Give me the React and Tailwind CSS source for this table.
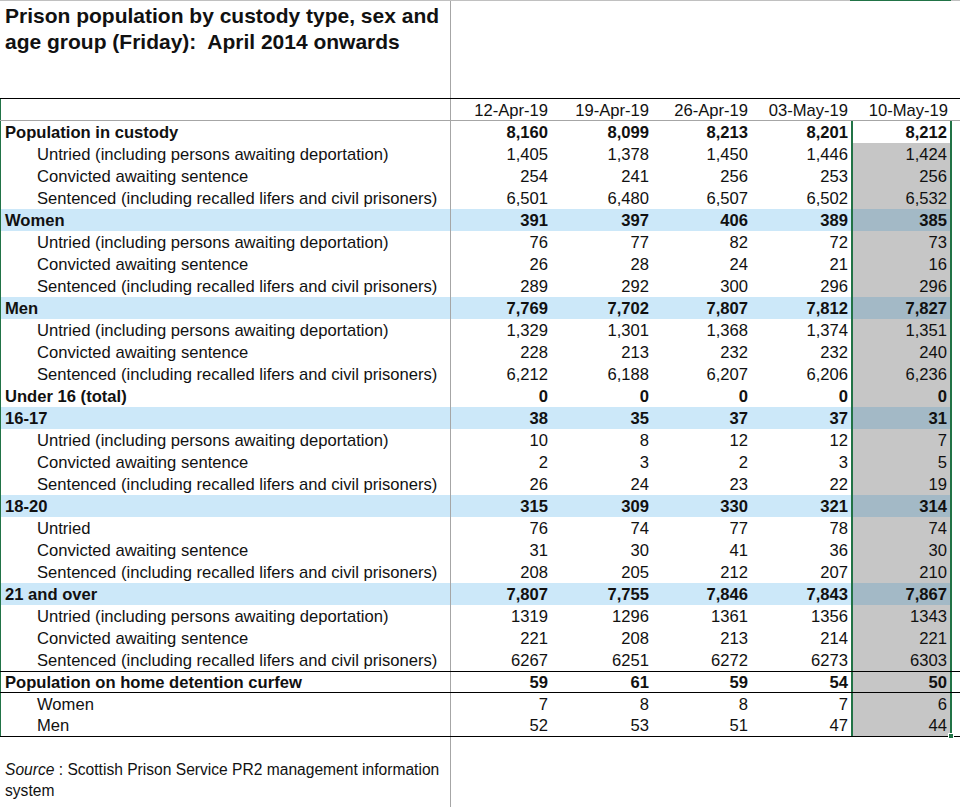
import React from 'react';

const dates = ['12-Apr-19', '19-Apr-19', '26-Apr-19', '03-May-19', '10-May-19'];

const UNT = 'Untried (including persons awaiting deportation)';
const CON = 'Convicted awaiting sentence';
const SEN = 'Sentenced (including recalled lifers and civil prisoners)';

// kind: h = bold heading, b = bold + blue band, s = indented sub row
const rows = [
  ['h', 'Population in custody', ['8,160', '8,099', '8,213', '8,201', '8,212']],
  ['s', UNT, ['1,405', '1,378', '1,450', '1,446', '1,424']],
  ['s', CON, ['254', '241', '256', '253', '256']],
  ['s', SEN, ['6,501', '6,480', '6,507', '6,502', '6,532']],
  ['b', 'Women', ['391', '397', '406', '389', '385']],
  ['s', UNT, ['76', '77', '82', '72', '73']],
  ['s', CON, ['26', '28', '24', '21', '16']],
  ['s', SEN, ['289', '292', '300', '296', '296']],
  ['b', 'Men', ['7,769', '7,702', '7,807', '7,812', '7,827']],
  ['s', UNT, ['1,329', '1,301', '1,368', '1,374', '1,351']],
  ['s', CON, ['228', '213', '232', '232', '240']],
  ['s', SEN, ['6,212', '6,188', '6,207', '6,206', '6,236']],
  ['h', 'Under 16 (total)', ['0', '0', '0', '0', '0']],
  ['b', '16-17', ['38', '35', '37', '37', '31']],
  ['s', UNT, ['10', '8', '12', '12', '7']],
  ['s', CON, ['2', '3', '2', '3', '5']],
  ['s', SEN, ['26', '24', '23', '22', '19']],
  ['b', '18-20', ['315', '309', '330', '321', '314']],
  ['s', 'Untried', ['76', '74', '77', '78', '74']],
  ['s', CON, ['31', '30', '41', '36', '30']],
  ['s', SEN, ['208', '205', '212', '207', '210']],
  ['b', '21 and over', ['7,807', '7,755', '7,846', '7,843', '7,867']],
  ['s', UNT, ['1319', '1296', '1361', '1356', '1343']],
  ['s', CON, ['221', '208', '213', '214', '221']],
  ['s', SEN, ['6267', '6251', '6272', '6273', '6303']],
  ['h', 'Population on home detention curfew', ['59', '61', '59', '54', '50']],
  ['s', 'Women', ['7', '8', '8', '7', '6']],
  ['s', 'Men', ['52', '53', '51', '47', '44']],
];

const colW = ['w-[100px]', 'w-[101px]', 'w-[99px]', 'w-[100px]'];

function Row({ kind, label, values, index, last }) {
  const bold = kind !== 's';
  const band = kind === 'b';
  const curfew = label === 'Population on home detention curfew';
  let edge = '';
  if (curfew) edge = 'border-y border-black';
  else if (last) edge = 'border-b border-black';

  let selBg = 'bg-[#c6c6c6]';
  if (index === 0) selBg = 'bg-white';
  else if (band) selBg = 'bg-[#a3b9c6]';

  return (
    <div className={`flex h-[22px] w-[960px] ${edge}`}>
      <div
        className={`flex items-stretch w-[851px] ${band ? 'bg-[#cce8f9]' : ''} border-l border-l-[#217346]`}
      >
        <div
          className={`w-[450px] flex items-center pt-[2px] whitespace-nowrap border-r border-[#a6a6a6] ${
            bold ? 'font-bold pl-[4px]' : 'pl-[36px]'
          }`}
        >
          {label}
        </div>
        {values.slice(0, 4).map((v, i) => (
          <div
            key={i}
            className={`${colW[i]} flex items-center justify-end pt-[2px] pr-[3px] ${bold ? 'font-bold' : ''}`}
          >
            {v}
          </div>
        ))}
      </div>
      <div
        className={`relative w-[101px] h-full flex items-center justify-end pt-[2px] pr-[3px] border-x-2 border-[#217346] ${selBg} ${
          bold ? 'font-bold' : ''
        }`}
      >
        {values[4]}
        {last && (
          <div className="absolute right-[-4px] bottom-[-3px] w-[6px] h-[6px] bg-[#217346] border border-white" />
        )}
      </div>
    </div>
  );
}

export default function App() {
  return (
    <div
      className="w-[960px] h-[807px] overflow-hidden bg-white text-[#111] text-[16.6px] leading-none"
      style={{ fontFamily: '"Liberation Sans", Arial, sans-serif' }}
    >
      {/* cut-off row above the title */}
      <div className="flex h-[1px] w-[960px] bg-[#c0c0c0]">
        <div className="w-[850px]" />
        <div className="w-[101px] bg-[#217346]" />
      </div>

      {/* title */}
      <div className="flex h-[98px] w-[960px] border-b border-black">
        <div className="w-[451px] h-full border-r border-[#a6a6a6] pl-[5px] pt-[2px] font-bold text-[21px] leading-[26px] whitespace-nowrap">
          Prison population by custody type, sex and
          <br />
          age group (Friday):&nbsp; April 2014 onwards
        </div>
      </div>

      {/* date header */}
      <div className="flex h-[22px] w-[960px] border-b border-[#a6a6a6]">
        <div className="w-[451px] h-full border-r border-[#a6a6a6] border-l border-l-[#217346]" />
        {dates.map((d, i) => (
          <div
            key={d}
            className={`${i < 4 ? colW[i] : 'w-[100px]'} flex items-center justify-end pt-[3px] pr-[3px]`}
          >
            {d}
          </div>
        ))}
      </div>

      {rows.map(([kind, label, values], i) => (
        <Row
          key={i}
          kind={kind}
          label={label}
          values={values}
          index={i}
          last={i === rows.length - 1}
        />
      ))}

      {/* footer */}
      <div className="flex h-[70px] w-[960px]">
        <div className="w-[451px] h-full border-r border-[#a6a6a6] pl-[5px] pt-[22px] text-[15.6px] leading-[21px] whitespace-nowrap">
          <span className="italic">Source</span> : Scottish Prison Service PR2 management information
          <br />
          system
        </div>
      </div>
    </div>
  );
}
